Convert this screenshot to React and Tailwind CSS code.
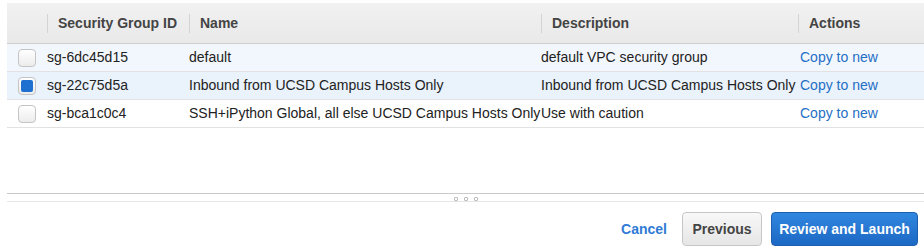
import React from 'react'

const groups = [
    { id: 'sg-6dc45d15', name: 'default', desc: 'default VPC security group', checked: false, bg: 'bg-[#f2f7fd]' },
    { id: 'sg-22c75d5a', name: 'Inbound from UCSD Campus Hosts Only', desc: 'Inbound from UCSD Campus Hosts Only', checked: true, bg: 'bg-[#eaf2fc]' },
    { id: 'sg-bca1c0c4', name: 'SSH+iPython Global, all else UCSD Campus Hosts Only', desc: 'Use with caution', checked: false, bg: 'bg-white' },
]

const cols = 'grid grid-cols-[40px_142px_352px_257px_1fr]'

function Checkbox({ checked }) {
    return (
        <div className="w-[18px] h-[18px] rounded-[4px] border border-[#c4c4c4] bg-gradient-to-b from-white to-[#ececec] flex items-center justify-center">
            {checked && <div className="w-[12px] h-[12px] rounded-[2px] bg-[#1d6fd0]" />}
        </div>
    )
}

function HeaderCell({ children, sep = true }) {
    return (
        <div className="flex items-center h-full">
            {sep && <div className="w-px h-[19px] bg-[#d4d4d4]" />}
            <span className="pl-[10px] font-bold text-[#444]">{children}</span>
        </div>
    )
}

export default function App() {
    return (
        <div className="w-[924px] h-[249px] bg-white overflow-hidden font-['Liberation_Sans',Arial,sans-serif] text-[14px] text-[#222]">
            <div className="pt-[3px] pl-[7px]">
                {/* Header */}
                <div className={`${cols} h-[41px] bg-gradient-to-b from-[#f1f1f1] to-[#e9e9e9] border-b border-[#cfcfcf]`}>
                    <div />
                    <HeaderCell>Security Group ID</HeaderCell>
                    <HeaderCell>Name</HeaderCell>
                    <HeaderCell>Description</HeaderCell>
                    <HeaderCell>Actions</HeaderCell>
                </div>

                {/* Rows */}
                {groups.map(g => (
                    <div key={g.id} className={`${cols} h-[28px] items-center border-b border-[#e2e2e2] ${g.bg}`}>
                        <div className="pl-[11px]"><Checkbox checked={g.checked} /></div>
                        <div>{g.id}</div>
                        <div className="whitespace-nowrap">{g.name}</div>
                        <div className="whitespace-nowrap">{g.desc}</div>
                        <div className="pl-[2px] text-[#1f6fc5]">Copy to new</div>
                    </div>
                ))}

                <div className="h-[65px]" />

                {/* Splitter */}
                <div className="border-t border-[#c9c9c9] h-[8px] flex items-center justify-center">
                    <div className="flex gap-[6px] mt-[3px]">
                        <span className="w-[4px] h-[4px] rounded-[1px] border border-[#bdbdbd]" />
                        <span className="w-[4px] h-[4px] rounded-[1px] border border-[#bdbdbd]" />
                        <span className="w-[4px] h-[4px] rounded-[1px] border border-[#bdbdbd]" />
                    </div>
                </div>
                <div className="border-t border-[#e6e6e6]" />
            </div>

            {/* Footer buttons */}
            <div className="flex justify-end items-center pr-[6px] mt-[10px]">
                <button className="font-bold text-[#2f7bd6] mr-[15px]">Cancel</button>
                <button className="h-[34px] w-[80px] rounded-[4px] border border-[#c6c6c6] bg-gradient-to-b from-[#f8f8f8] to-[#e6e6e6] font-bold text-[#444] mr-[9px]">Previous</button>
                <button className="h-[34px] w-[147px] rounded-[4px] border border-[#1b5fae] bg-gradient-to-b from-[#3187df] to-[#1c68c4] font-bold text-white">Review and Launch</button>
            </div>
        </div>
    )
}
